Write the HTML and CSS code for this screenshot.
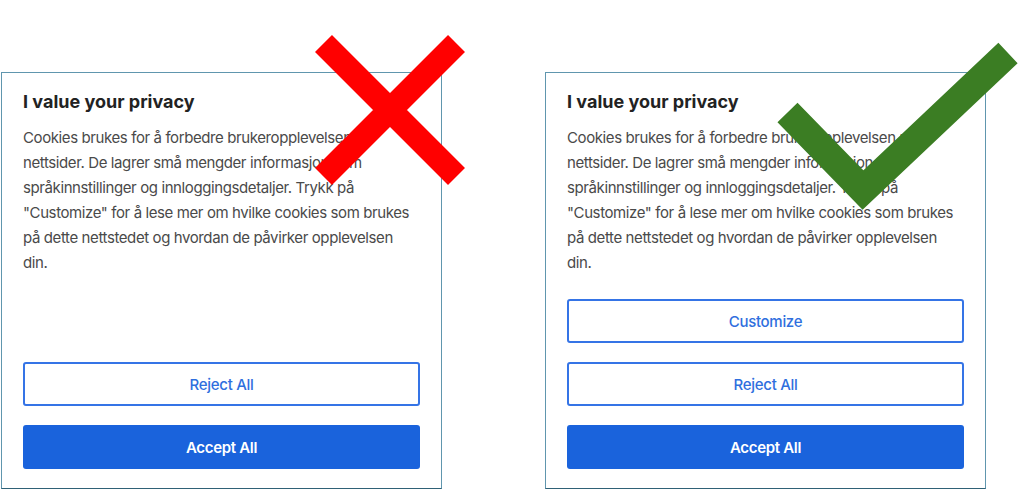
FILE: index.html
```html
<!DOCTYPE html>
<html lang="en">
<head>
  <meta charset="UTF-8">
  <meta name="viewport" content="width=device-width, initial-scale=1.0">
  <title>Cookie banner - do and don't</title>
  <link rel="stylesheet" href="styles.css">
</head>
<body>
  <main class="compare">
    <!-- Don't: no way to customize -->
    <section class="example">
      <div class="banner">
        <h2>I value your privacy</h2>
        <p>Cookies brukes for å forbedre brukeropplevelsen på nettsider. De lagrer små mengder informasjon som språkinnstillinger og innloggingsdetaljer. Trykk på "Customize" for å lese mer om hvilke cookies som brukes på dette nettstedet og hvordan de påvirker opplevelsen din.</p>
        <div class="actions">
          <button class="btn btn-outline">Reject All</button>
          <button class="btn btn-primary">Accept All</button>
        </div>
      </div>
      <svg class="mark mark-bad" width="170" height="170" viewBox="0 0 170 170">
        <path d="M19.5 19.5 L152.5 152.5 M152.5 19.5 L19.5 152.5" stroke="#ff0000" stroke-width="24" fill="none"/>
      </svg>
    </section>

    <!-- Do: all three choices -->
    <section class="example">
      <div class="banner">
        <h2>I value your privacy</h2>
        <p>Cookies brukes for å forbedre brukeropplevelsen på nettsider. De lagrer små mengder informasjon som språkinnstillinger og innloggingsdetaljer. Trykk på "Customize" for å lese mer om hvilke cookies som brukes på dette nettstedet og hvordan de påvirker opplevelsen din.</p>
        <div class="actions">
          <button class="btn btn-outline">Customize</button>
          <button class="btn btn-outline">Reject All</button>
          <button class="btn btn-primary">Accept All</button>
        </div>
      </div>
      <svg class="mark mark-good" width="260" height="190" viewBox="0 0 260 190">
        <path d="M15.5 82.5 L91 160 L236 23" stroke="#3b7d23" stroke-width="28" fill="none" stroke-miterlimit="10"/>
      </svg>
    </section>
  </main>
</body>
</html>
```

FILE: styles.css
```css
body {
  margin: 0;
  padding: 72px 0 0 1px;
  background-color: #fff;
  font-family: 'Inter', 'Liberation Sans', sans-serif;
  overflow: hidden;
}
.compare {
  display: flex;
  gap: 103px;
}
.example {
  position: relative;
}
.banner {
  box-sizing: border-box;
  width: 441px;
  height: 417px;
  border: 1px solid #6096ae;
  border-bottom-color: #2f6176;
  padding: 17px 21px 19px;
  display: flex;
  flex-direction: column;
  background-color: #fff;
}
h2 {
  margin: 0 0 11px;
  font-size: 18px;
  line-height: 24px;
  font-weight: 700;
  color: #222;
}
p {
  margin: 0;
  font-size: 15px;
  line-height: 25px;
  letter-spacing: -0.4px;
  color: #4a4a4a;
}
.actions {
  margin-top: auto;
  display: flex;
  flex-direction: column;
  gap: 19px;
}
.btn {
  box-sizing: border-box;
  height: 44px;
  border-radius: 3px;
  font-family: inherit;
  font-size: 15px;
  font-weight: 500;
  letter-spacing: -0.3px;
  cursor: pointer;
}
.btn-outline {
  background-color: #fff;
  border: 2px solid #3574e6;
  color: #2f6fde;
}
.btn-primary {
  background-color: #1a63dc;
  border: none;
  color: #fff;
  font-weight: 600;
}
.mark {
  position: absolute;
}
.mark-bad {
  left: 303px;
  top: -48px;
}
.mark-good {
  left: 227px;
  top: -42px;
}
```
